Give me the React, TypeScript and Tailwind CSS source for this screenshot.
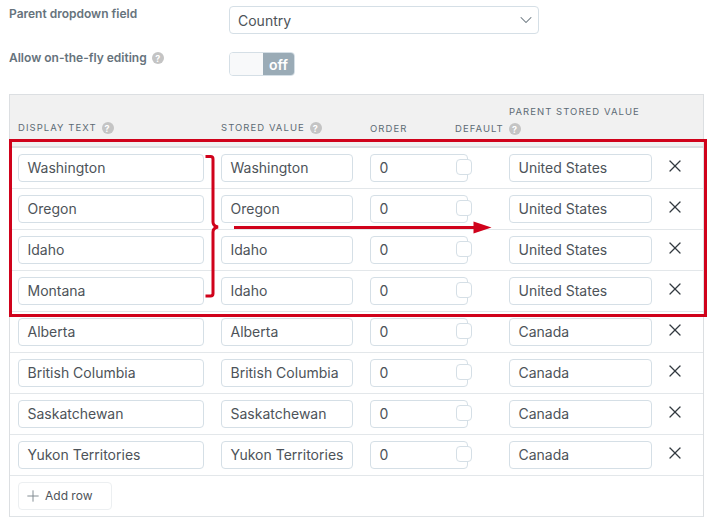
import { ChevronDown, Plus, X } from 'lucide-react';

const rows = [
  ['Washington', 'Washington', 'United States'],
  ['Oregon', 'Oregon', 'United States'],
  ['Idaho', 'Idaho', 'United States'],
  ['Montana', 'Idaho', 'United States'],
  ['Alberta', 'Alberta', 'Canada'],
  ['British Columbia', 'British Columbia', 'Canada'],
  ['Saskatchewan', 'Saskatchewan', 'Canada'],
  ['Yukon Territories', 'Yukon Territories', 'Canada'],
];

function Help() {
  return (
    <span className="inline-flex items-center justify-center w-3 h-3 rounded-full bg-[#c4c4c4] text-white text-[9px] font-bold leading-none">?</span>
  );
}

function Field({ value, className }: { value: string; className: string }) {
  return (
    <div className={`h-[28px] flex items-center pl-[8.5px] pb-[1px] bg-white border border-[#d5dfe6] rounded-[4px] text-[14px] text-[#4d5359] whitespace-nowrap shrink-0 ${className}`}>
      {value}
    </div>
  );
}

export default function App() {
  return (
    <div className="relative w-[713px] h-[525px] bg-white overflow-hidden font-['Inter',sans-serif]">
      {/* Top fields */}
      <div className="flex pl-[9px] pt-[6px] h-[47px]">
        <div className="w-[220px] text-[12px] font-semibold text-[#66737c] leading-[15px]">Parent dropdown field</div>
        <div className="w-[310px] h-[28px] flex items-center justify-between pl-[8px] pr-[2px] border border-[#d5dfe6] rounded-[4px] text-[14px] text-[#4d5359]">
          Country
          <ChevronDown className="w-[20px] h-[20px] text-[#66737c]" strokeWidth={1.25} />
        </div>
      </div>
      <div className="flex items-start pl-[9px] h-[47px]">
        <div className="w-[220px] flex items-start gap-[5px] pt-[3px] text-[12px] font-semibold text-[#66737c] leading-[15px]">
          Allow on-the-fly editing
          <span className="mt-[2px] flex"><Help /></span>
        </div>
        <div className="mt-[5px] w-[66px] h-[24px] flex border border-[#d5dfe6] rounded-[4px] overflow-hidden">
          <div className="w-[33px] bg-[#f8f9fa]" />
          <div className="flex-1 bg-[#9aabb6] text-white text-[14px] font-semibold flex items-center justify-center">off</div>
        </div>
      </div>

      {/* Table */}
      <div className="ml-[9px] w-[695px] border border-[#dcdfe2] border-b-[#dfe3e6]">
        <div className="h-[53px] flex bg-[#f1f1f1] border-b-[2px] border-[#dcdfe2] text-[9.5px] tracking-[1.05px] text-[#5d6b75] leading-[12px]">
          <div className="w-[211px] pl-[8px] pt-[16px] flex items-center gap-[5px] h-[50px] shrink-0">
            DISPLAY TEXT <Help />
          </div>
          <div className="w-[149px] flex items-center gap-[5px] pt-[16px] h-[50px] shrink-0">
            STORED VALUE <Help />
          </div>
          <div className="w-[85px] pt-[17px] flex items-center h-[50px] shrink-0">ORDER</div>
          <div className="w-[54px] pt-[17px] flex items-center h-[50px] shrink-0">DEFAULT</div>
          <div className="pt-[11px]">
            <div>PARENT STORED VALUE</div>
            <div className="mt-[5px] flex"><Help /></div>
          </div>
        </div>
        {rows.map((r, i) => (
          <div key={i} className="h-[41px] flex items-center pl-[8px] border-b border-[#e3e7ea]">
            <Field value={r[0]} className="w-[186px]" />
            <Field value={r[1]} className="w-[132px] ml-[17px]" />
            <div className="relative ml-[17px] shrink-0">
              <Field value="0" className="w-[98px]" />
              <div className="absolute left-[86px] top-[5px] w-[16px] h-[16px] bg-white border border-[#d5dfe6] rounded-[4px]" />
            </div>
            <Field value={r[2]} className="w-[143px] ml-[41px]" />
            <X className="ml-[13px] mb-[4px] w-[20px] h-[20px] text-[#333a40]" strokeWidth={1.5} />
          </div>
        ))}
        <div className="h-[40px] pl-[8px] pt-[6px]">
          <div className="w-[94px] h-[28px] flex items-center gap-[3px] pl-[5px] border border-[#eceff1] rounded-[4px] text-[12px] text-[#4d5359]">
            <Plus className="w-[18px] h-[18px] text-[#7c868d]" strokeWidth={1.25} />
            Add row
          </div>
        </div>
      </div>

      {/* Annotation */}
      <div className="absolute left-[9px] top-[139px] w-[698px] h-[178px] border-[3px] border-[#d0021b]" />
      <svg className="absolute left-0 top-0 pointer-events-none" width="713" height="525" fill="none">
        <path d="M205.500 156.500 H210.500 Q213 156.500 213 159 V222 Q213 226 218 227 Q213 228 213 232 V293.500 Q213 296 210.500 296 H205.500" stroke="#d0021b" strokeWidth="3" />
        <path d="M234 227.500 H475" stroke="#d0021b" strokeWidth="3" />
        <path d="M473.500 221.500 L491.500 227.500 L473.500 233.500 Z" fill="#d0021b" />
      </svg>
    </div>
  );
}
